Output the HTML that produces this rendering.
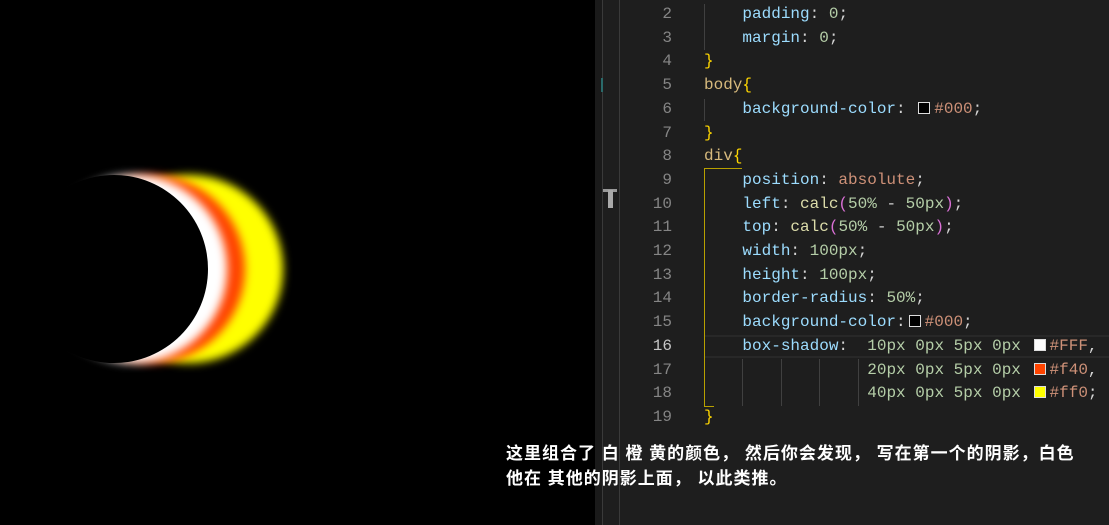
<!DOCTYPE html>
<html><head><meta charset="utf-8"><style>
*{margin:0;padding:0}
body{width:1109px;height:525px;background:#000;position:relative;overflow:hidden;font-family:"Liberation Mono",monospace}
.ed{position:absolute;left:595px;top:0;width:514px;height:525px;background:#1e1e1e}
.ln{position:absolute;left:620px;width:52px;text-align:right;color:#858585;font-size:16px;line-height:23.7px}
.cd{position:absolute;left:704px;color:#d4d4d4;font-size:16px;line-height:23.7px;white-space:pre}
.p{color:#9cdcfe}.n{color:#b5cea8}.k{color:#ce9178}.s{color:#d7ba7d}.b{color:#ffd700}.f{color:#dcdcaa}.r{color:#da70d6}
.sw{display:inline-block;width:10px;height:10px;border:1.5px solid #ddd;vertical-align:-1px;margin:0 4px 0 3px}
.cap{position:absolute;left:506px;top:441px;color:#fff;font-family:"Liberation Sans","Noto Sans CJK SC",sans-serif;font-weight:bold;font-size:17px;line-height:25px;letter-spacing:1px;white-space:pre}
</style></head><body>
<div style="position:absolute;left:20px;top:175px;width:188px;height:188px;border-radius:50%;background:#000;box-shadow:19px 0 9px 0 #fff,37px 0 9px 0 #f40,75px 0 9px 0 #ff0"></div>
<div class="ed"></div>
<div style="position:absolute;left:595px;top:0;width:7px;height:525px;background:#1a1a1a"></div>
<div style="position:absolute;left:602px;top:0;width:1px;height:525px;background:#3a3a3a"></div>
<div style="position:absolute;left:619px;top:0;width:1px;height:525px;background:#3a3a3a"></div>
<div style="position:absolute;left:601px;top:78px;width:2px;height:14px;background:#2a6a6a"></div>
<div style="position:absolute;left:603px;top:189px;width:14px;height:3px;background:#999"></div>
<div style="position:absolute;left:608px;top:190px;width:5px;height:18px;background:#aaa"></div>
<div style="position:absolute;left:704px;top:335px;width:405px;height:23px;border-top:2px solid #282828;border-bottom:2px solid #282828;box-sizing:border-box"></div>
<div style="position:absolute;left:704px;top:4px;width:1px;height:46px;background:#404040"></div>
<div style="position:absolute;left:704px;top:99px;width:1px;height:22px;background:#404040"></div>
<div style="position:absolute;left:704px;top:168px;width:1px;height:239px;background:#b8a000"></div>
<div style="position:absolute;left:704px;top:168px;width:38px;height:1px;background:#b8a000"></div>
<div style="position:absolute;left:704px;top:406px;width:10px;height:1px;background:#b8a000"></div>
<div style="position:absolute;left:742px;top:359px;width:1px;height:47px;background:#404040"></div>
<div style="position:absolute;left:781px;top:359px;width:1px;height:47px;background:#404040"></div>
<div style="position:absolute;left:819px;top:359px;width:1px;height:47px;background:#404040"></div>
<div style="position:absolute;left:858px;top:359px;width:1px;height:47px;background:#404040"></div>
<div class="ln" style="top:3px">2<br>3<br>4<br>5<br>6<br>7<br>8<br>9<br>10<br>11<br>12<br>13<br>14<br>15<br><span style="color:#c6c6c6">16</span><br>17<br>18<br>19</div>
<div class="cd" style="top:3px">    <span class="p">padding</span>: <span class="n">0</span>;
    <span class="p">margin</span>: <span class="n">0</span>;
<span class="b">}</span>
<span class="s">body</span><span class="b">{</span>
    <span class="p">background-color</span>: <span class="sw" style="background:#000"></span><span class="k">#000</span>;
<span class="b">}</span>
<span class="s">div</span><span class="b">{</span>
    <span class="p">position</span>: <span class="k">absolute</span>;
    <span class="p">left</span>: <span class="f">calc</span><span class="r">(</span><span class="n">50%</span> - <span class="n">50px</span><span class="r">)</span>;
    <span class="p">top</span>: <span class="f">calc</span><span class="r">(</span><span class="n">50%</span> - <span class="n">50px</span><span class="r">)</span>;
    <span class="p">width</span>: <span class="n">100px</span>;
    <span class="p">height</span>: <span class="n">100px</span>;
    <span class="p">border-radius</span>: <span class="n">50%</span>;
    <span class="p">background-color</span>:<span class="sw" style="background:#000"></span><span class="k">#000</span>;
    <span class="p">box-shadow</span>:  <span class="n">10px</span> <span class="n">0px</span> <span class="n">5px</span> <span class="n">0px</span> <span class="sw" style="background:#fff"></span><span class="k">#FFF</span>,
                 <span class="n">20px</span> <span class="n">0px</span> <span class="n">5px</span> <span class="n">0px</span> <span class="sw" style="background:#f40"></span><span class="k">#f40</span>,
                 <span class="n">40px</span> <span class="n">0px</span> <span class="n">5px</span> <span class="n">0px</span> <span class="sw" style="background:#ff0"></span><span class="k">#ff0</span>;
<span class="b">}</span></div>
<div class="cap">这里组合了 白 橙 黄的颜色， 然后你会发现， 写在第一个的阴影，白色
他在 其他的阴影上面， 以此类推。</div>
</body></html>
